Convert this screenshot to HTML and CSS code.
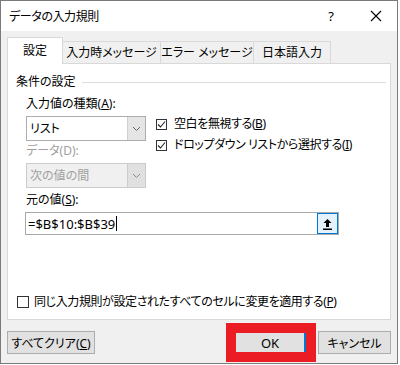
FILE: index.html
```html
<!DOCTYPE html>
<html lang="ja">
<head>
<meta charset="utf-8">
<link rel="stylesheet" href="styles.css">
</head>
<body>
<div class="dialog">
  <div class="titlebar">
    <span class="title">データの入力規則</span>
    <span class="tb-help">?</span>
    <span class="tb-close"><svg width="12" height="12" viewBox="0 0 12 12"><path d="M1 1L11 11M11 1L1 11" stroke="#000" stroke-width="1.1"/></svg></span>
  </div>
  <div class="tabs">
    <div class="tab active">設定</div>
    <div class="tab t2">入力時メッセージ</div>
    <div class="tab t3">エラー メッセージ</div>
    <div class="tab t4">日本語入力</div>
  </div>
  <div class="panel">
    <div class="legend"><span>条件の設定</span><span class="rule"></span></div>
    <div class="grid">
      <div class="label l1">入力値の種類(<u>A</u>):</div>
      <div class="select s1"><span class="val">リスト</span><span class="arrow"><svg width="9" height="6" viewBox="0 0 9 6"><path d="M1 1L4.5 4.5L8 1" fill="none" stroke="#666" stroke-width="1"/></svg></span></div>
      <div class="checks">
        <div class="check"><span class="box"><svg width="9" height="9" viewBox="0 0 9 9"><path d="M1 4.5L3.5 7L8 1.5" fill="none" stroke="#222" stroke-width="1.1"/></svg></span><span class="tight">空白を無視する(<u>B</u>)</span></div>
        <div class="check"><span class="box"><svg width="9" height="9" viewBox="0 0 9 9"><path d="M1 4.5L3.5 7L8 1.5" fill="none" stroke="#222" stroke-width="1.1"/></svg></span><span class="tight">ドロップダウン リストから選択する(<u>I</u>)</span></div>
      </div>
      <div class="label l2 disabled">データ(D):</div>
      <div class="select s2 disabled"><span class="val">次の値の間</span><span class="arrow"><svg width="9" height="6" viewBox="0 0 9 6"><path d="M1 1L4.5 4.5L8 1" fill="none" stroke="#888" stroke-width="1"/></svg></span></div>
    </div>
    <div class="label l3">元の値(<u>S</u>):</div>
    <div class="input"><span class="text">=$B$10:$B$39</span><span class="caret"></span><span class="pick"><svg width="11" height="12" viewBox="0 0 11 12"><path d="M5.5 1L1.5 5H4V9H7V5H9.5Z" fill="#000"/><rect x="1" y="10.5" width="9" height="1.5" fill="#000"/></svg></span></div>
    <div class="apply"><span class="box big"></span><span class="tight">同じ入力規則が設定されたすべてのセルに変更を適用する(<u>P</u>)</span></div>
  </div>
  <div class="footer">
    <button class="btn clear">すべてクリア(<u>C</u>)</button>
    <span class="spacer"></span>
    <button class="btn ok">OK</button>
    <button class="btn cancel">キャンセル</button>
  </div>
</div>
</body>
</html>
```

FILE: styles.css
```css
html, body {
  margin: 0;
  padding: 0;
  background: #ffffff;
}
body {
  font-family: "Noto Sans", "Noto Sans CJK JP", sans-serif;
  font-size: 12px;
  color: #000;
  font-feature-settings: "palt";
}
.tight { letter-spacing: -0.4px; }
.dialog {
  width: 398px;
  height: 364px;
  box-sizing: border-box;
  border: 1px solid #7a7a7a;
  background: #f0f0f0;
  display: flex;
  flex-direction: column;
}
.titlebar {
  height: 30px;
  background: #fff;
  display: flex;
  align-items: center;
  flex: none;
}
.title {
  padding-left: 8px;
  flex: 1;
  font-size: 12px;
  letter-spacing: -0.4px;
}
.tb-help {
  width: 48px;
  text-align: center;
  font-size: 13px;
}
.tb-close {
  width: 42px;
  display: flex;
  justify-content: center;
  align-items: center;
}
.tabs {
  display: flex;
  align-items: flex-end;
  padding: 7px 0 0 6px;
  height: 25px;
  flex: none;
  position: relative;
  z-index: 1;
}
.tab {
  height: 21px;
  line-height: 21px;
  border: 1px solid #d9d9d9;
  border-bottom: none;
  background: #f0f0f0;
  text-align: center;
  box-sizing: content-box;
  margin-left: -1px;
}
.tab.active {
  height: 26px;
  line-height: 26px;
  background: #fff;
  width: 54px;
  margin-left: 0;
  margin-bottom: -1px;
}
.tab.t2 { width: 97px; }
.tab.t3 { width: 92px; }
.tab.t4 { width: 76px; }
.panel {
  margin: 0 6px;
  height: 257px;
  box-sizing: border-box;
  border: 1px solid #d9d9d9;
  background: #fff;
  display: flex;
  flex-direction: column;
  align-items: flex-start;
  padding: 10px 4px 9px 8px;
  flex: none;
}
.legend {
  display: flex;
  align-items: center;
  height: 16px;
  line-height: 16px;
  align-self: stretch;
}
.legend .rule {
  flex: 1;
  height: 1px;
  background: #dcdcdc;
  margin-left: 6px;
}
.grid {
  display: grid;
  grid-template-columns: 120px auto;
  column-gap: 10px;
  margin-left: 10px;
  margin-top: 6px;
}
.label {
  height: 16px;
  line-height: 16px;
}
.l1 { grid-column: 1; grid-row: 1; margin-bottom: 4px; }
.s1 { grid-column: 1; grid-row: 2; }
.l2 { grid-column: 1; grid-row: 3; margin-top: 2px; margin-bottom: 4px; }
.s2 { grid-column: 1; grid-row: 4; }
.checks {
  grid-column: 2;
  grid-row: 2 / 4;
  display: flex;
  flex-direction: column;
  gap: 5px;
}
.disabled { color: #a0a0a0; }
.select {
  height: 25px;
  box-sizing: border-box;
  border: 1px solid #adadad;
  display: flex;
  align-items: stretch;
  background: #fff;
}
.select .val {
  flex: 1;
  padding-left: 3px;
  line-height: 23px;
}
.select .arrow {
  width: 17px;
  background: #e5e5e5;
  border-left: 1px solid #d0d0d0;
  display: flex;
  align-items: center;
  justify-content: center;
}
.select.disabled {
  background: #f0f0f0;
  border-color: #cccccc;
}
.select.disabled .arrow {
  background: #e0e0e0;
  border-left-color: #cccccc;
}
.check, .apply {
  display: flex;
  align-items: center;
  height: 16px;
  line-height: 16px;
  gap: 7px;
}
.box {
  width: 11px;
  height: 11px;
  box-sizing: border-box;
  border: 1px solid #333;
  background: #fff;
  display: flex;
  align-items: center;
  justify-content: center;
  flex: none;
}
.box.big {
  width: 12px;
  height: 12px;
}
.l3 {
  margin-left: 10px;
  margin-top: 4px;
}
.input {
  margin: 4px 0 0 9px;
  width: 314px;
  height: 23px;
  box-sizing: border-box;
  border: 1px solid #a8a8a8;
  display: flex;
  align-items: center;
}
.input .text {
  font-size: 13px;
  padding-left: 2px;
}
.input .caret {
  width: 1px;
  height: 15px;
  background: #000;
  margin-left: 1px;
}
.input .pick {
  margin-left: auto;
  width: 21px;
  height: 21px;
  box-sizing: border-box;
  border: 1px solid #0078d7;
  background: #e5f1fb;
  display: flex;
  align-items: center;
  justify-content: center;
}
.apply {
  margin-top: auto;
  margin-left: 1px;
  gap: 5px;
}
.footer {
  display: flex;
  align-items: center;
  padding: 11px 6px 0 6px;
}
.spacer { flex: 1; }
.btn {
  font: inherit;
  color: #000;
  height: 23px;
  box-sizing: border-box;
  background: #e1e1e1;
  border: 1px solid #adadad;
  padding: 0;
  margin: 0;
}
.btn.clear { width: 88px; }
.btn.ok {
  width: 70px;
  height: 19px;
  border: none;
  border-right: 2px solid #0078d7;
  outline: 10px solid #ec1c24;
  outline-offset: 0;
  margin-right: 12px;
  font-size: 13px;
}
.btn.cancel { width: 73px; }
```
